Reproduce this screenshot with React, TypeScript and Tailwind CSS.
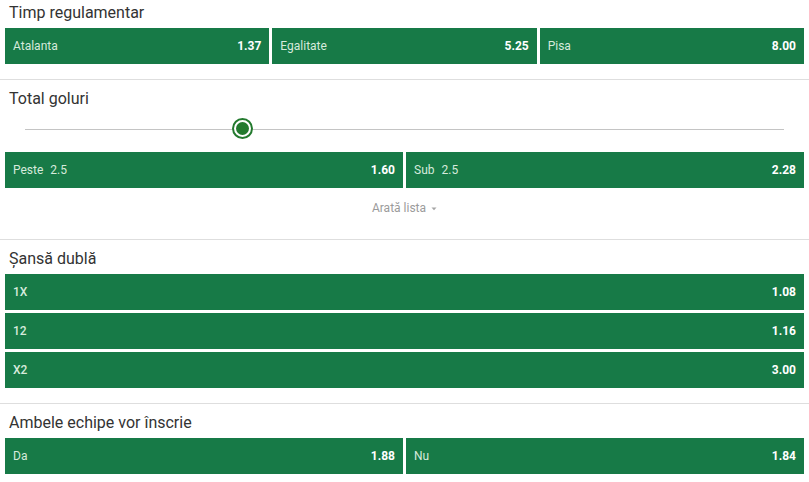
import React from 'react';

const font = { fontFamily: 'Roboto, "Noto Sans", sans-serif' };

function OddButton({ label, odd, strong }: { label: React.ReactNode; odd: string; strong?: boolean }) {
  return (
    <button className="flex h-[36px] items-center justify-between bg-[#177a47] px-[8px] pb-[1px] text-[12px]">
      <span className={`text-[#d6eadc] ${strong ? 'font-medium' : ''}`}>{label}</span>
      <span className="font-bold text-white">{odd}</span>
    </button>
  );
}

function Title({ children }: { children: React.ReactNode }) {
  return <div className="mb-[5px] pl-[4px] text-[16px] leading-[20px] text-[#333]">{children}</div>;
}

export default function App() {
  return (
    <div style={font} className="w-[809px] h-[482px] bg-white overflow-hidden">
      {/* Timp regulamentar */}
      <div className="border-b border-[#dedede] px-[5px] pt-[3px] pb-[15px]">
        <Title>Timp regulamentar</Title>
        <div className="grid grid-cols-3 gap-[3px]">
          <OddButton label="Atalanta" odd="1.37" />
          <OddButton label="Egalitate" odd="5.25" />
          <OddButton label="Pisa" odd="8.00" />
        </div>
      </div>

      {/* Total goluri */}
      <div className="border-b border-[#dedede] px-[5px] pt-[9px] pb-[23px]">
        <Title>Total goluri</Title>
        <div className="relative mx-[20px] mb-[3px] flex h-[40px] items-center -mt-[5px]">
          <div className="h-px w-full bg-[#c4c4c4]" />
          <div className="absolute left-[207px] top-[9px] flex h-[21px] w-[21px] items-center justify-center rounded-full border-[2px] border-[#237a2e] bg-white">
            <div className="h-[13px] w-[13px] rounded-full bg-[#237a2e]" />
          </div>
        </div>
        <div className="grid grid-cols-2 gap-[3px]">
          <OddButton label={<>Peste<span className="ml-[7px]">2.5</span></>} odd="1.60" />
          <OddButton label={<>Sub<span className="ml-[7px]">2.5</span></>} odd="2.28" />
        </div>
        <div className="mt-[12px] flex items-center justify-center gap-[5px] text-[12px] leading-[16px] text-[#9b9b9b]">
          <span>Arată lista</span>
          <svg width="6" height="4" viewBox="0 0 6 4" className="mt-[2px]">
            <path d="M0.5 0.5 L3 3.2 L5.5 0.5 Z" fill="#a5a5a5" />
          </svg>
        </div>
      </div>

      {/* Șansă dublă */}
      <div className="border-b border-[#dedede] px-[5px] pt-[9px] pb-[15px]">
        <Title>Șansă dublă</Title>
        <div className="flex flex-col gap-[3px]">
          <OddButton label="1X" odd="1.08" strong />
          <OddButton label="12" odd="1.16" strong />
          <OddButton label="X2" odd="3.00" strong />
        </div>
      </div>

      {/* Ambele echipe vor înscrie */}
      <div className="px-[5px] pt-[9px]">
        <Title>Ambele echipe vor înscrie</Title>
        <div className="grid grid-cols-2 gap-[3px]">
          <OddButton label="Da" odd="1.88" />
          <OddButton label="Nu" odd="1.84" />
        </div>
      </div>
    </div>
  );
}
